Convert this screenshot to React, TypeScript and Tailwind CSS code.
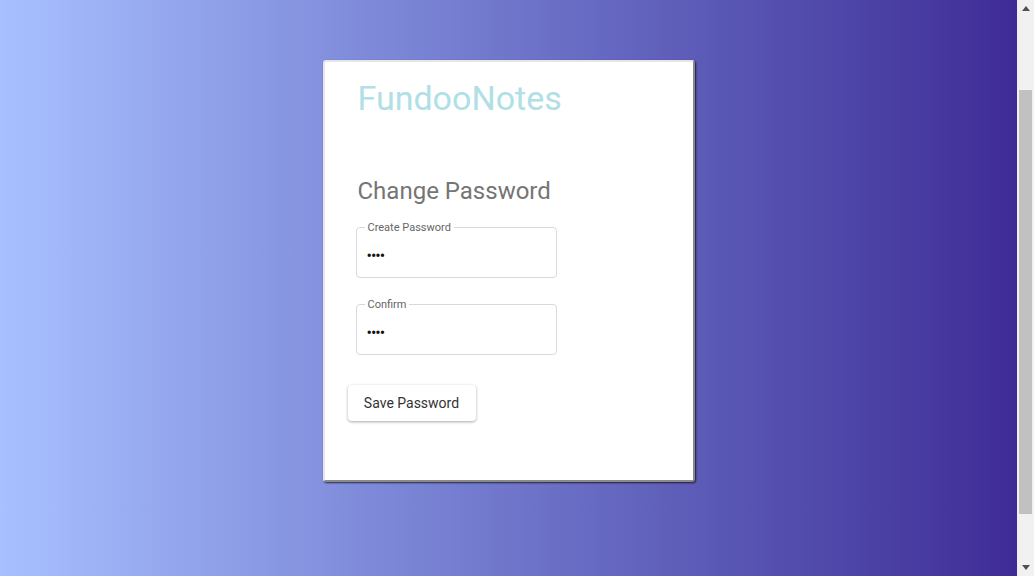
// Change password card on a horizontal gradient, with the page's scrollbar at the right

function OutlinedField({ label }: { label: string }) {
  return (
    <fieldset className="w-[201px] h-[56px] border border-[#d9d9d9] rounded-[4px] px-[8px] m-0">
      <legend className="px-[3px] text-[11px] leading-[11px] text-[#666] font-['Roboto',sans-serif]">{label}</legend>
      <input
        type="password"
        defaultValue="abcd"
        readOnly
        className="w-full mt-[11px] px-[2px] bg-transparent outline-none text-[16px] text-[#111] font-['Roboto',sans-serif] tracking-[-1px]"
      />
    </fieldset>
  )
}

function Scrollbar() {
  return (
    <div className="w-[17px] h-full bg-[#f1f1f1] flex flex-col items-center">
      <div className="h-[17px] flex items-center justify-center">
        <svg width="8" height="5" viewBox="0 0 8 5"><path d="M0 5 L4 0 L8 5 Z" fill="#505050" /></svg>
      </div>
      <div className="mt-[73px] w-[13px] h-[424px] bg-[#c1c1c1]" />
      <div className="mt-auto h-[17px] flex items-center justify-center">
        <svg width="8" height="5" viewBox="0 0 8 5"><path d="M0 0 L8 0 L4 5 Z" fill="#505050" /></svg>
      </div>
    </div>
  )
}

export default function App() {
  return (
    <div className="h-screen w-full flex overflow-hidden font-['Roboto',sans-serif]">
      <main className="flex-1 h-full bg-gradient-to-r from-[#a8c0ff] to-[#3f2b96] pt-[60px]">
        <div className="mx-auto w-[372px] h-[422px] bg-white rounded-[3px] border-[2px] border-t-[#e6e6e6] border-l-[#e6e6e6] border-r-[#8a8a8a] border-b-[#8a8a8a] shadow-[1px_1px_2px_rgba(0,0,0,0.7)] pl-[33px] pt-[14px]">
          <h1 className="mt-[2px] text-[34px] leading-[40px] text-[#b0e0e6]">FundooNotes</h1>
          <h2 className="mt-[58px] text-[24px] leading-[30px] text-[#757575]">Change Password</h2>
          <div className="mt-[16px] -ml-[2px] flex flex-col gap-[21px]">
            <OutlinedField label="Create Password" />
            <OutlinedField label="Confirm" />
          </div>
          <button className="mt-[30px] -ml-[10px] w-[128px] h-[36px] bg-white rounded-[4px] text-[14px] text-[#333] shadow-[0_1px_3px_rgba(0,0,0,0.35)]">
            Save Password
          </button>
        </div>
      </main>
      <Scrollbar />
    </div>
  )
}
